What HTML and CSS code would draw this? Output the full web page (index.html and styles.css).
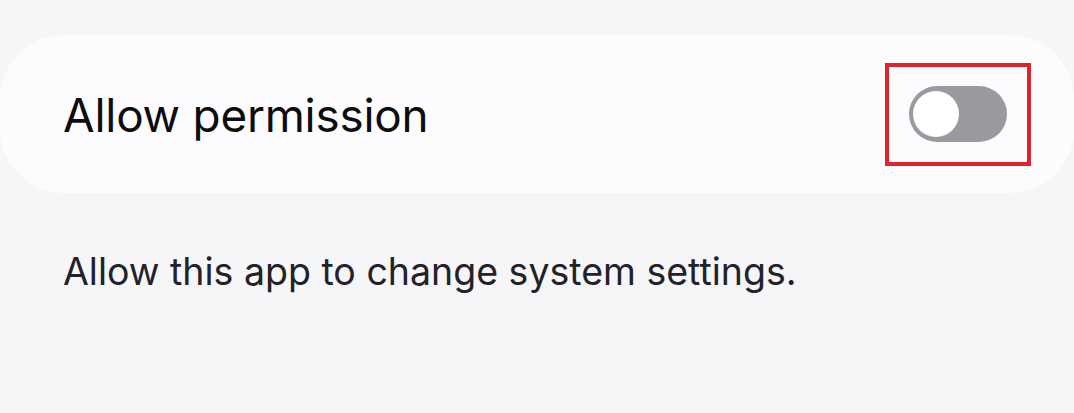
FILE: index.html
```html
<!DOCTYPE html>
<html>
<head>
<meta charset="utf-8">
<link rel="stylesheet" href="styles.css">
</head>
<body>
<div class="page">
  <div class="card">
    <span class="title">Allow permission</span>
    <div class="highlight">
      <div class="track"><div class="thumb"></div></div>
    </div>
  </div>
  <p class="desc">Allow this app to change system settings.</p>
</div>
</body>
</html>
```
FILE: styles.css
```css
html, body {
  margin: 0;
  padding: 0;
  background: #f6f6f9;
}
.page {
  width: 1074px;
  height: 413px;
  padding-top: 35px;
  box-sizing: border-box;
  font-family: "Inter", "Roboto", sans-serif;
}
.card {
  height: 158px;
  background: #fcfcfe;
  border-radius: 64px;
  display: flex;
  align-items: center;
  justify-content: space-between;
  padding-left: 63px;
  padding-right: 43px;
}
.title {
  font-size: 45.8px;
  line-height: 56px;
  color: #0d0d0d;
  letter-spacing: -0.2px;
  padding-top: 4px;
}
.highlight {
  width: 146px;
  height: 103px;
  box-sizing: border-box;
  border: 4px solid #e0232c;
  display: flex;
  align-items: center;
  justify-content: center;
}
.track {
  width: 98px;
  height: 56px;
  border-radius: 28px;
  background: #9a9a9e;
  display: flex;
  align-items: center;
  padding-left: 4px;
  box-sizing: border-box;
}
.thumb {
  width: 46px;
  height: 46px;
  border-radius: 50%;
  background: #ffffff;
}
.desc {
  margin: 56px 0 0 63px;
  font-size: 37.5px;
  line-height: 45px;
  color: #222228;
}
```
